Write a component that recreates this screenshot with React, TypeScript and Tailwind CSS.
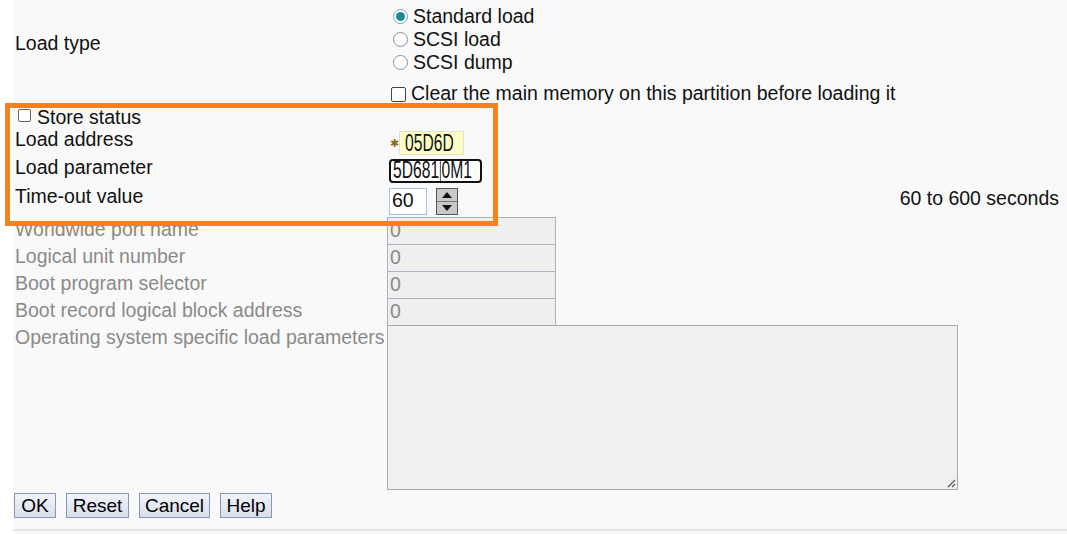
import React from "react";

const font = { fontFamily: '"Liberation Sans", Arial, sans-serif' };

function Radio({ checked, label }: { checked?: boolean; label: string }) {
  return (
    <div className="flex h-[23px] items-center">
      <span
        className={
          "ml-[6px] flex h-[15px] w-[15px] items-center justify-center rounded-full border bg-white " +
          (checked ? "border-[#6aa8b0]" : "border-[#8e8e8e]")
        }
      >
        {checked && <span className="h-[9px] w-[9px] rounded-full bg-[#1f8a91]" />}
      </span>
      <span className="ml-[5px]">{label}</span>
    </div>
  );
}

// condensed field text, squeezed horizontally
function Narrow({ children }: { children: React.ReactNode }) {
  return (
    <span className="inline-block origin-left scale-x-[0.68] whitespace-nowrap text-[23px] leading-none">
      {children}
    </span>
  );
}

function Spinner() {
  return (
    <div className="ml-[9px] flex h-[27px] w-[22px] flex-col border border-[#555] bg-[#c9c9c9]">
      <div className="flex flex-1 items-center justify-center border-b border-[#777]">
        <svg width="10" height="6" viewBox="0 0 10 6">
          <path d="M0 6 L5 0 L10 6 Z" fill="#111" />
        </svg>
      </div>
      <div className="flex flex-1 items-center justify-center">
        <svg width="10" height="6" viewBox="0 0 10 6">
          <path d="M0 0 L5 6 L10 0 Z" fill="#111" />
        </svg>
      </div>
    </div>
  );
}

function DisabledRow({ label, first }: { label: string; first?: boolean }) {
  return (
    <div className={"flex h-[28px] " + (first ? "" : "-mt-px")}>
      <div className="flex w-[372px] items-center pb-[3px] text-[#8a8a8a]">{label}</div>
      <div className="flex h-[28px] w-[169px] items-center border border-[#a9b3bd] bg-[#efefef] pl-[2px] text-[#8a8a8a]">
        0
      </div>
    </div>
  );
}

function Btn({ label, w }: { label: string; w: string }) {
  return (
    <button
      className={
        "flex h-[25px] items-center justify-center border border-[#8797b8] bg-gradient-to-b from-[#f2f4fa] to-[#d9deec] text-[19px] leading-none text-black " +
        w
      }
    >
      {label}
    </button>
  );
}

export default function App() {
  return (
    <div className="relative h-[534px] w-[1067px] overflow-hidden bg-white text-[19.5px] leading-none text-[#111]" style={font}>
      <div className="ml-[13px] h-full bg-[#f9f9f9] pl-[2px] pr-[8px]">
        {/* Load type */}
        <div className="flex pt-[5px]">
          <div className="flex w-[372px] items-center pt-[8px]">Load type</div>
          <div className="flex flex-col">
            <Radio checked label="Standard load" />
            <Radio label="SCSI load" />
            <Radio label="SCSI dump" />
          </div>
        </div>

        {/* Clear memory */}
        <div className="flex h-[31px] items-center pt-[9px]">
          <div className="w-[372px]" />
          <span className="ml-[4px] h-[15px] w-[15px] rounded-[2px] border border-[#444] bg-white" />
          <span className="ml-[5px]">Clear the main memory on this partition before loading it</span>
        </div>

        {/* Store status */}
        <div className="flex h-[24px] items-center pt-[2px]">
          <span className="mb-[5px] ml-[3px] h-[13px] w-[13px] rounded-[2px] border border-[#666] bg-white" />
          <span className="ml-[6px]">Store status</span>
        </div>

        {/* Load address */}
        <div className="flex h-[28px] items-center">
          <div className="flex h-full w-[372px] items-center pb-[6px]">Load address</div>
          <span className="ml-[3px] w-[9px] text-[11px] text-[#8b6a1c]">✱</span>
          <div className="flex h-[24px] w-[65px] items-center border border-[#e2e2c8] bg-[#ffffc8] pl-[5px]">
            <span className="w-[40px]">
              <Narrow>05D6D</Narrow>
            </span>
          </div>
        </div>

        {/* Load parameter */}
        <div className="flex h-[28px] items-center">
          <div className="flex h-full w-[372px] items-center pb-[6px]">Load parameter</div>
          <div className="ml-[2px] flex h-[24px] w-[93px] items-center rounded-[4px] border-2 border-[#111] bg-white pl-[2px]">
            <span className="w-[80px]">
              <Narrow>
                5D681<span className="mx-px inline-block h-[22px] w-[1.5px] bg-black align-middle" />0M1
              </Narrow>
            </span>
          </div>
        </div>

        {/* Time-out */}
        <div className="flex h-[32px] items-center">
          <div className="flex h-full w-[372px] items-center pb-[8px]">Time-out value</div>
          <div className="ml-[2px] flex h-[27px] w-[38px] items-center border border-[#9ec3e4] bg-white pl-[2px]">60</div>
          <Spinner />
          <div className="flex h-full flex-1 items-center justify-end pb-[4px]">60 to 600 seconds</div>
        </div>

        {/* Disabled SCSI fields */}
        <DisabledRow first label="Worldwide port name" />
        <DisabledRow label="Logical unit number" />
        <DisabledRow label="Boot program selector" />
        <DisabledRow label="Boot record logical block address" />

        <div className="-mt-px flex">
          <div className="w-[372px] whitespace-nowrap pt-[3px] text-[#8a8a8a]">Operating system specific load parameters</div>
          <div className="relative h-[165px] w-[571px] border border-[#a9a9a9] bg-[#f0f0f0]">
            <svg className="absolute bottom-[1px] right-[1px]" width="10" height="10" viewBox="0 0 10 10">
              <path d="M9 2 L2 9 M9 6 L6 9" stroke="#555" strokeWidth="1.2" />
            </svg>
          </div>
        </div>

        {/* Buttons */}
        <div className="-ml-px mt-[3px] flex gap-[10px]">
          <Btn label="OK" w="w-[42px]" />
          <Btn label="Reset" w="w-[63px]" />
          <Btn label="Cancel" w="w-[71px]" />
          <Btn label="Help" w="w-[52px]" />
        </div>

        <div className="-ml-[2px] -mr-[8px] mt-[11px] h-[2px] bg-[#e4e4e4]" />
      </div>

      {/* highlight overlay */}
      <div className="pointer-events-none absolute left-[5px] top-[103px] h-[123px] w-[493px] border-[5px] border-[#f5821f]" />
    </div>
  );
}
